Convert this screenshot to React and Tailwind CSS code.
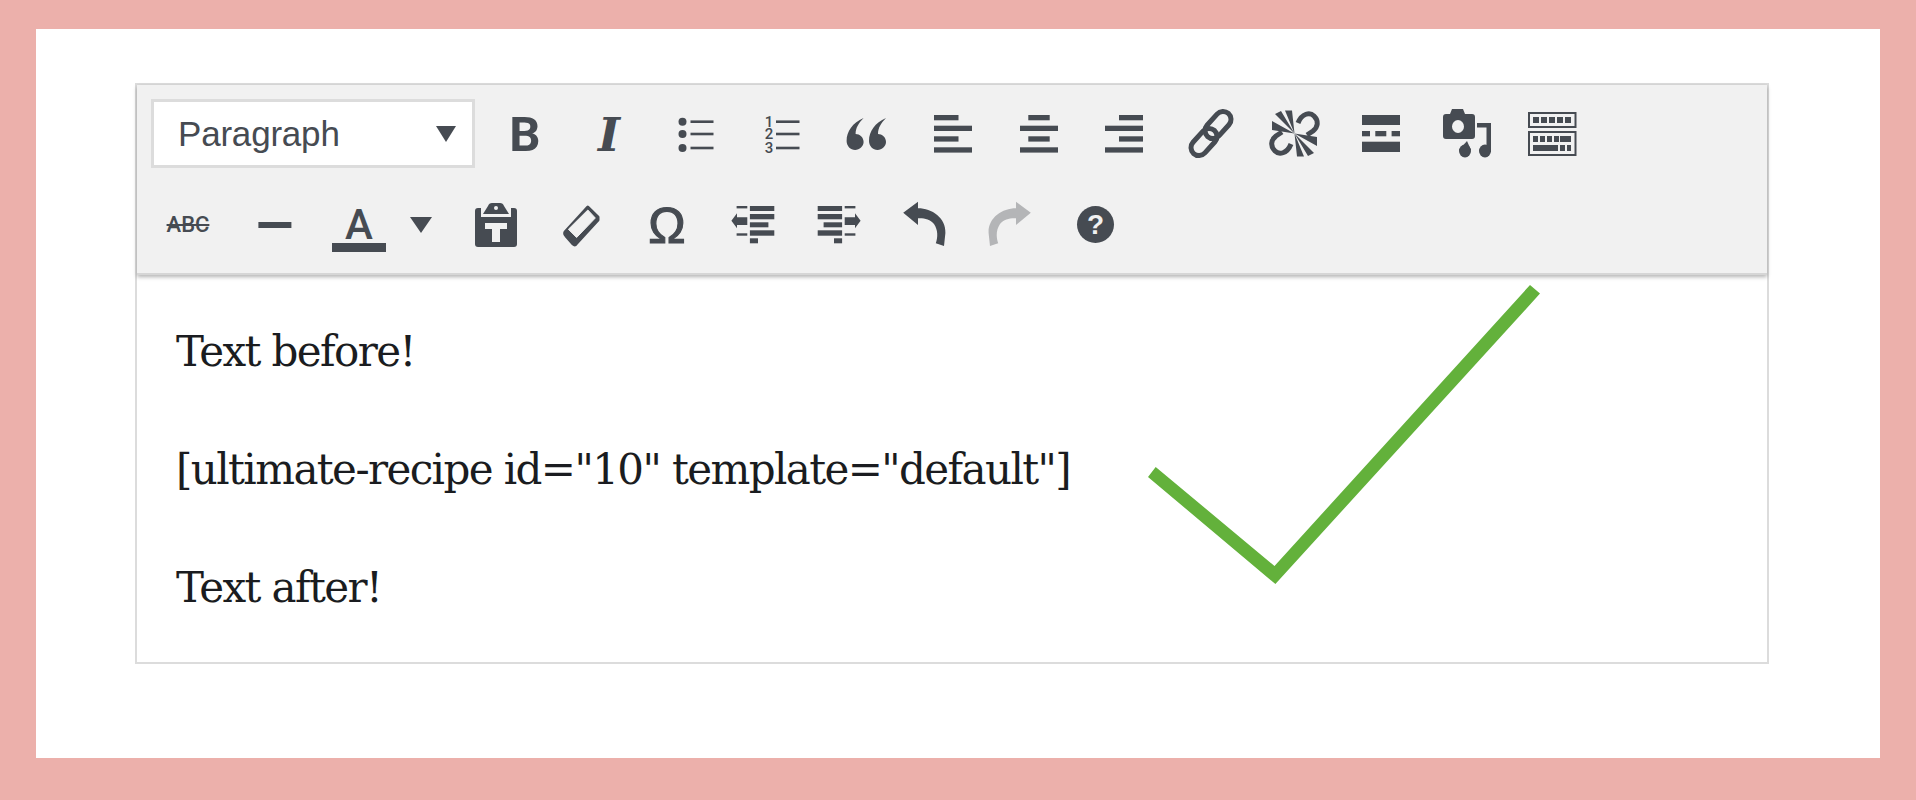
import React from 'react'

const INK = '#464b52'
const BG = '#f1f1f1'

// every icon is drawn in a 44x44 box around the button centre
const Icon = ({ children, fill = INK }) => (
  <svg viewBox="0 0 44 44" fill={fill} className="h-11 w-11 overflow-visible">
    {children}
  </svg>
)

const Btn = ({ children }) => (
  <span className="flex h-full w-[85.6px] shrink-0 items-center justify-center">{children}</span>
)

const Bars = ({ rows }) => (
  <Icon>
    {rows.map(([x, y, w, h = 5.3]) => (
      <rect key={`${x}-${y}`} x={x} y={y} width={w} height={h} />
    ))}
  </Icon>
)

const quote = 'M17 0C6 5 0 13 0 23C0 28 4 32 8.5 32C13 32 17 28 17 24C17 19 13 16 9 16C9 10 12 5 17 0Z'
const undo = 'M1.2 9.7L16 -1.3V5.3C30 5.3 44 15 43.4 30L42 43L33.8 40.3C36 34 36 27 32 21C28 16 22 15 16 15.3V22Z'
const hook = 'M25 11C29 1 37 0 41 4C46 9 45 15 40 19L34 23'

const Outdent = () => (
  <>
    <rect x="5.6" y="3" width="10.7" height="2.4" />
    <rect x="5.6" y="30.3" width="10.7" height="2.4" />
    <rect x="18.9" y="3" width="24.4" height="5" />
    <rect x="18.9" y="11" width="24.4" height="5.3" />
    <rect x="18.9" y="19.3" width="18.5" height="5" />
    <rect x="18.9" y="27.3" width="24.4" height="5.4" />
    <rect x="18.9" y="35.3" width="8.1" height="5" />
    <path d="M0.4 17.7L6 10.3V14.3H16.3V22H6V25.3Z" />
  </>
)

const row1 = [
  <text x="22" y="39" textAnchor="middle" fontFamily="Roboto" fontWeight="700" fontSize="49">B</text>,
  <text x="20" y="39" textAnchor="middle" fontFamily="DejaVu Serif" fontStyle="italic" fontWeight="700" fontSize="47">I</text>,
  <>
    {[9.7, 22, 36].map((y) => (
      <g key={y}>
        <circle cx="8.5" cy={y} r="4" />
        <rect x="16.5" y={y - 1.3} width="23" height="2.6" />
      </g>
    ))}
  </>,
  <>
    {[['1', 9.7], ['2', 22], ['3', 36]].map(([n, y]) => (
      <g key={n}>
        <text x="9" y={y + 5} textAnchor="middle" fontFamily="Roboto" fontWeight="500" fontSize="15">{n}</text>
        <rect x="16" y={y - 1.3} width="23.5" height="2.6" />
      </g>
    ))}
  </>,
  <>
    <path d={quote} transform="translate(1.6 6)" />
    <path d={quote} transform="translate(24 6)" />
  </>,
]

const kitchenSink = (
  <>
    <g fill="none" stroke={INK} strokeWidth="2">
      <rect x="-1" y="1" width="46.5" height="14" />
      <rect x="-1" y="20" width="46.5" height="23" />
    </g>
    {[3, 11, 19, 27, 35].map((x) => <rect key={x} x={x} y="5" width="6" height="6" />)}
    {[3, 10, 17, 24].map((x) => <rect key={x} x={x} y="24" width="5" height="6" />)}
    <rect x="30" y="24" width="11" height="6" />
    <rect x="3" y="33" width="25" height="6" />
    <rect x="30" y="33" width="5" height="6" />
    <rect x="37" y="33" width="4" height="6" />
  </>
)

const Fan = () => (
  <path d="M21.5 21.5L-1 9V18ZM21.5 21.5L2 2L8 -1ZM21.5 21.5L12 -1.5L19 -1.5Z" />
)

const Toolbar = () => (
  <div className="relative z-10 border-b-2 border-[#d6d6d6] bg-[#f1f1f1] pt-[14px] pb-[18px] shadow-[0_2px_4px_rgba(0,0,0,0.3)]">
    <div className="flex h-[69px] items-center pl-[14px]">
      <div className="mr-[7.2px] flex h-[69px] w-[324px] shrink-0 items-center justify-between border-[3px] border-[#dcdcdc] bg-white pr-[16px] pl-[24px]">
        <span className="font-['Liberation_Sans',sans-serif] text-[35px] leading-none tracking-[-0.2px] text-[#464b52]">Paragraph</span>
        <svg viewBox="0 0 20 16" fill={INK} className="h-4 w-5">
          <path d="M0 0H20L10 16Z" />
        </svg>
      </div>
      {row1.map((icon, i) => (
        <Btn key={i}><Icon>{icon}</Icon></Btn>
      ))}
      <Btn><Bars rows={[[3, 3, 24.5], [3, 13.7, 38], [3, 24.3, 24.5], [3, 35.3, 38]]} /></Btn>
      <Btn><Bars rows={[[11.3, 3, 21.4], [3, 13.7, 38], [11.3, 24.3, 21.4], [3, 35.3, 38]]} /></Btn>
      <Btn><Bars rows={[[17, 3, 24], [3, 13.7, 38], [17, 24.3, 24], [3, 35.3, 38]]} /></Btn>
      <Btn>
        <Icon>
          <g fill="none" stroke={INK} strokeWidth="5" transform="translate(1 0)">
            <rect x="21" y="-2.5" width="16" height="31" rx="8" transform="rotate(42 29 13)" />
            <rect x="7" y="14.5" width="16" height="31" rx="8" transform="rotate(42 15 30)" />
          </g>
        </Icon>
      </Btn>
      <Btn>
        <Icon>
          <Fan />
          <g transform="rotate(180 21.5 21.5)"><Fan /></g>
          <path d={hook} fill="none" stroke={INK} strokeWidth="5" />
          <path d={hook} fill="none" stroke={INK} strokeWidth="5" transform="rotate(180 21.5 21.5)" />
        </Icon>
      </Btn>
      <Btn><Bars rows={[[3, 3, 38, 10], [3, 19, 8], [16.3, 19, 11], [32.6, 19, 8.4], [3, 29.7, 38, 10.3]]} /></Btn>
      <Btn>
        <Icon>
          <path d="M5 2L7 -3H18L20 2H27Q30 2 30 5V24Q30 27 27 27H1Q-2 27 -2 24V5Q-2 2 1 2Z" />
          <ellipse cx="13" cy="14.5" rx="6" ry="6.5" fill={BG} />
          <rect x="32" y="11" width="14" height="4.5" />
          <rect x="41.5" y="11" width="4.5" height="29" />
          <ellipse cx="40" cy="39" rx="6" ry="6.5" />
          <ellipse cx="20" cy="39" rx="6" ry="6.5" />
          <path d="M22 29L26 38H14Z" />
        </Icon>
      </Btn>
      <Btn><Icon>{kitchenSink}</Icon></Btn>
    </div>
    <div className="mt-[27px] flex h-[60px] items-center pl-[8.2px]">
      <Btn>
        <span className="font-['Roboto',sans-serif] text-[22px] leading-none font-medium text-[#464b52] line-through">ABC</span>
      </Btn>
      <Btn><Bars rows={[[6.4, 19, 33, 6]]} /></Btn>
      <Btn>
        <Icon>
          <text x="22" y="36" textAnchor="middle" fontFamily="Roboto" fontWeight="500" fontSize="42">A</text>
          <rect x="-5" y="40" width="54" height="9" />
        </Icon>
      </Btn>
      <span className="mr-[13.4px] flex w-[38px] justify-center">
        <svg viewBox="0 0 22 16" fill={INK} className="h-4 w-[22px]">
          <path d="M0 0H22L11 16Z" />
        </svg>
      </span>
      <Btn>
        <Icon>
          <rect x="1" y="5" width="42" height="39" rx="3" />
          <rect x="7" y="0" width="30" height="14" fill={BG} />
          <path d="M9 11L14 3Q15 0 18 0H26Q29 0 30 3L35 11Z" />
          <circle cx="22" cy="5" r="2" fill={BG} />
          <path d="M11 20H33V26H26V39H18V26H11Z" fill={BG} />
        </Icon>
      </Btn>
      <Btn>
        <Icon>
          <path d="M27.8 4L38 14V17L16 41Q15 43 13 41L6 33Q4 31 5 29Z" stroke={INK} strokeWidth="3" strokeLinejoin="round" />
          <path d="M27.8 7L35.3 15L16.6 34.5L8.4 26.3Z" fill={BG} stroke={BG} strokeLinejoin="round" />
        </Icon>
      </Btn>
      <Btn>
        <Icon>
          <text x="22" y="40" textAnchor="middle" fontFamily="Liberation Sans" fontSize="50" stroke={INK} strokeWidth="1.2">Ω</text>
        </Icon>
      </Btn>
      <Btn><Icon><Outdent /></Icon></Btn>
      <Btn><Icon><g transform="translate(44 0) scale(-1 1)"><Outdent /></g></Icon></Btn>
      <Btn><Icon><path d={undo} /></Icon></Btn>
      <Btn><Icon fill="#b4b5b7"><path d={undo} transform="translate(44 0) scale(-1 1)" /></Icon></Btn>
      <Btn>
        <Icon>
          <circle cx="22.5" cy="21.5" r="18.5" />
          <text x="22.5" y="31" textAnchor="middle" fontFamily="Liberation Sans" fontWeight="700" fontSize="28" fill={BG}>?</text>
        </Icon>
      </Btn>
    </div>
  </div>
)

const lines = ['Text before!', '[ultimate-recipe id="10" template="default"]', 'Text after!']

const App = () => {
  return (
    <div className="h-[800px] bg-[#ecb0ab] px-[36px] pt-[29px]">
      <div className="h-[729px] bg-white pt-[54px] pl-[99px]">
        <div className="relative h-[581px] w-[1634px] border-2 border-[#dcdcdc]">
          <Toolbar />
          <div className="flex flex-col gap-[59px] pt-[47px] pl-[39px] font-['DejaVu_Serif',serif] text-[42px] leading-[59px] tracking-[-1.6px] text-[#1a1c20]">
            {lines.map((line) => (
              <p key={line}>{line}</p>
            ))}
          </div>
          <svg viewBox="0 0 392 299" className="absolute top-[200px] left-[1011px] z-20 h-[299px] w-[392px]">
            <path d="M382 0L392 8.6L127.4 299L0 192L7.7 182L126.5 281Z" fill="#63b13b" />
          </svg>
        </div>
      </div>
    </div>
  )
}

export default App
